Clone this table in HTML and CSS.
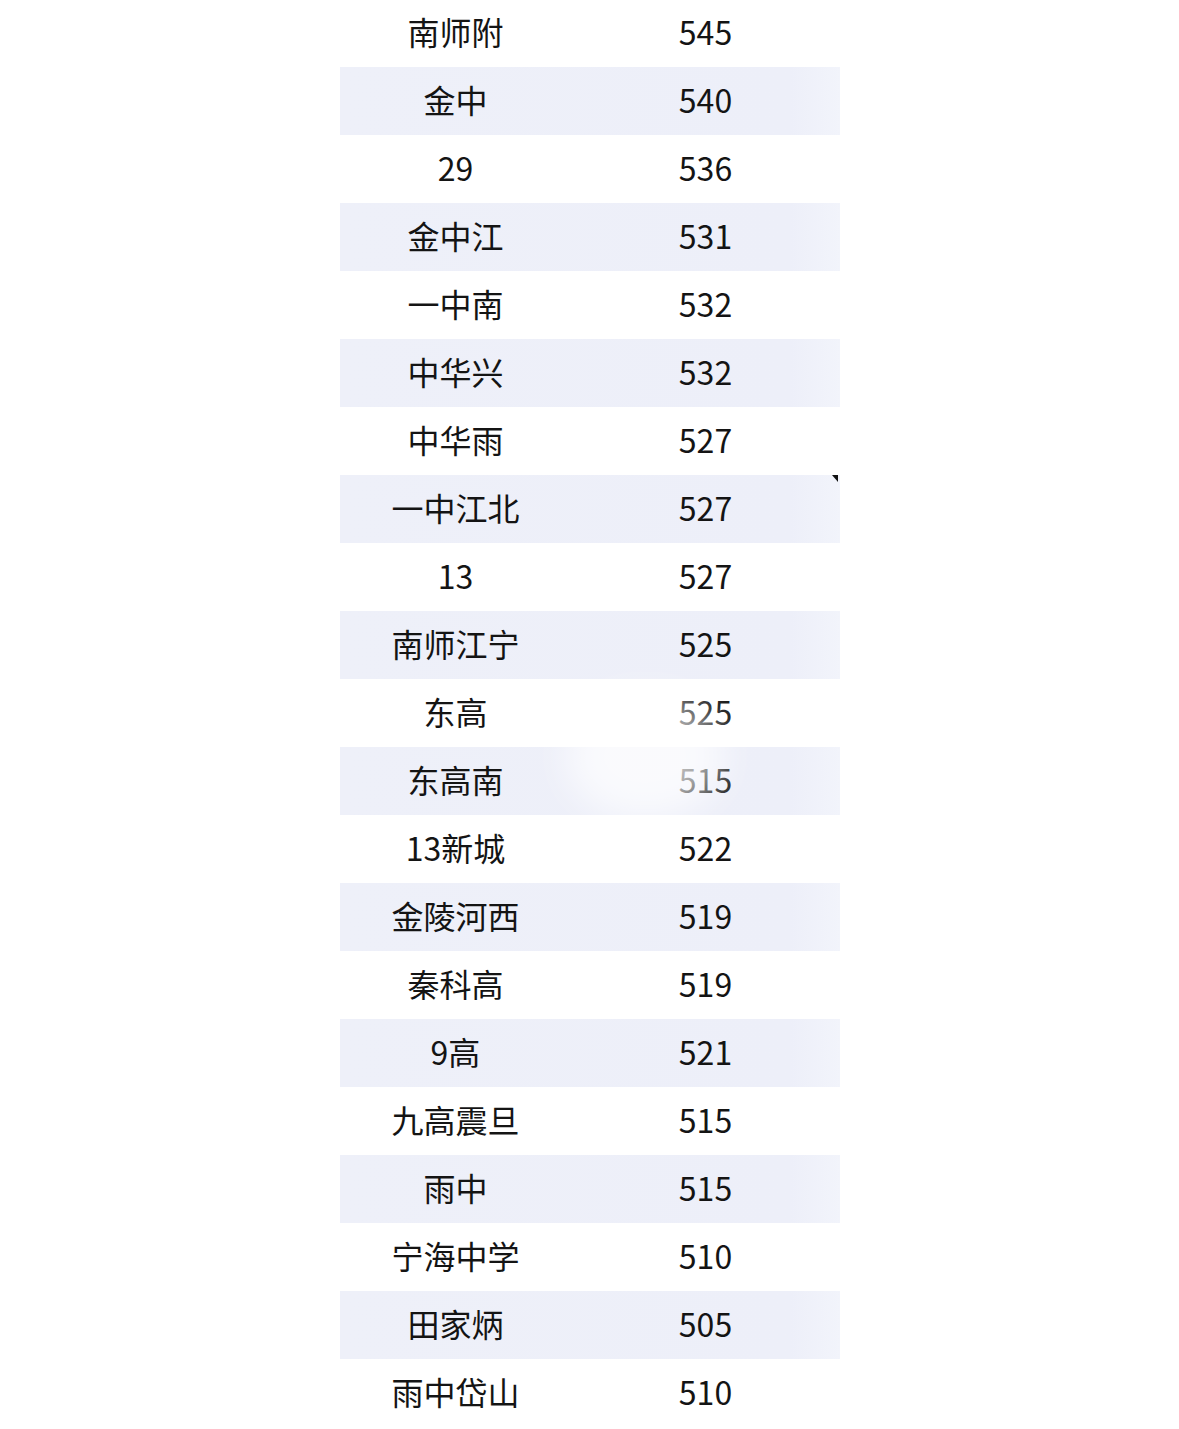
FILE: index.html
```html
<!DOCTYPE html>
<html lang="zh-CN">
<head>
<meta charset="utf-8">
<title>分数线</title>
<link rel="stylesheet" href="styles.css">
</head>
<body>
<div class="table">
  <div class="row"><div class="name">南师附</div><div class="score">545</div></div>
  <div class="row alt"><div class="name">金中</div><div class="score">540</div></div>
  <div class="row"><div class="name">29</div><div class="score">536</div></div>
  <div class="row alt"><div class="name">金中江</div><div class="score">531</div></div>
  <div class="row"><div class="name">一中南</div><div class="score">532</div></div>
  <div class="row alt"><div class="name">中华兴</div><div class="score">532</div></div>
  <div class="row"><div class="name">中华雨</div><div class="score">527</div></div>
  <div class="row alt"><div class="name">一中江北</div><div class="score">527</div><span class="mark"></span></div>
  <div class="row"><div class="name">13</div><div class="score">527</div></div>
  <div class="row alt"><div class="name">南师江宁</div><div class="score">525</div></div>
  <div class="row"><div class="name">东高</div><div class="score">525</div></div>
  <div class="row alt"><div class="name">东高南</div><div class="score">515</div></div>
  <div class="row"><div class="name">13新城</div><div class="score">522</div></div>
  <div class="row alt"><div class="name">金陵河西</div><div class="score">519</div></div>
  <div class="row"><div class="name">秦科高</div><div class="score">519</div></div>
  <div class="row alt"><div class="name">9高</div><div class="score">521</div></div>
  <div class="row"><div class="name">九高震旦</div><div class="score">515</div></div>
  <div class="row alt"><div class="name">雨中</div><div class="score">515</div></div>
  <div class="row"><div class="name">宁海中学</div><div class="score">510</div></div>
  <div class="row alt"><div class="name">田家炳</div><div class="score">505</div></div>
  <div class="row"><div class="name">雨中岱山</div><div class="score">510</div></div>
  <div class="smudge"></div>
</div>
</body>
</html>
```
FILE: styles.css
```css
html, body {
  margin: 0;
  padding: 0;
  background: #ffffff;
}
body {
  font-family: "Noto Sans CJK SC", "Noto Sans", sans-serif;
  color: #141414;
  overflow: hidden;
}
.table {
  position: relative;
  width: 500px;
  margin: -1px auto 0;
  display: flex;
  flex-direction: column;
}
.row {
  position: relative;
  display: grid;
  grid-template-columns: 232px 268px;
  height: 68px;
  box-sizing: border-box;
  padding-bottom: 4px;
  align-items: center;
  font-size: 32px;
  line-height: 1;
}
.row.alt {
  background: linear-gradient(90deg, #eef0f9 0%, #edeff9 90%, #f2f4fb 100%);
}
.name, .score {
  text-align: center;
}
.mark {
  position: absolute;
  right: 2px;
  top: 0;
  width: 0;
  height: 0;
  border-top: 7px solid #111;
  border-left: 6px solid transparent;
}
.smudge {
  position: absolute;
  left: 225px;
  top: 695px;
  width: 160px;
  height: 125px;
  background: rgba(255, 255, 255, 0.7);
  filter: blur(18px);
  border-radius: 50%;
}
```
